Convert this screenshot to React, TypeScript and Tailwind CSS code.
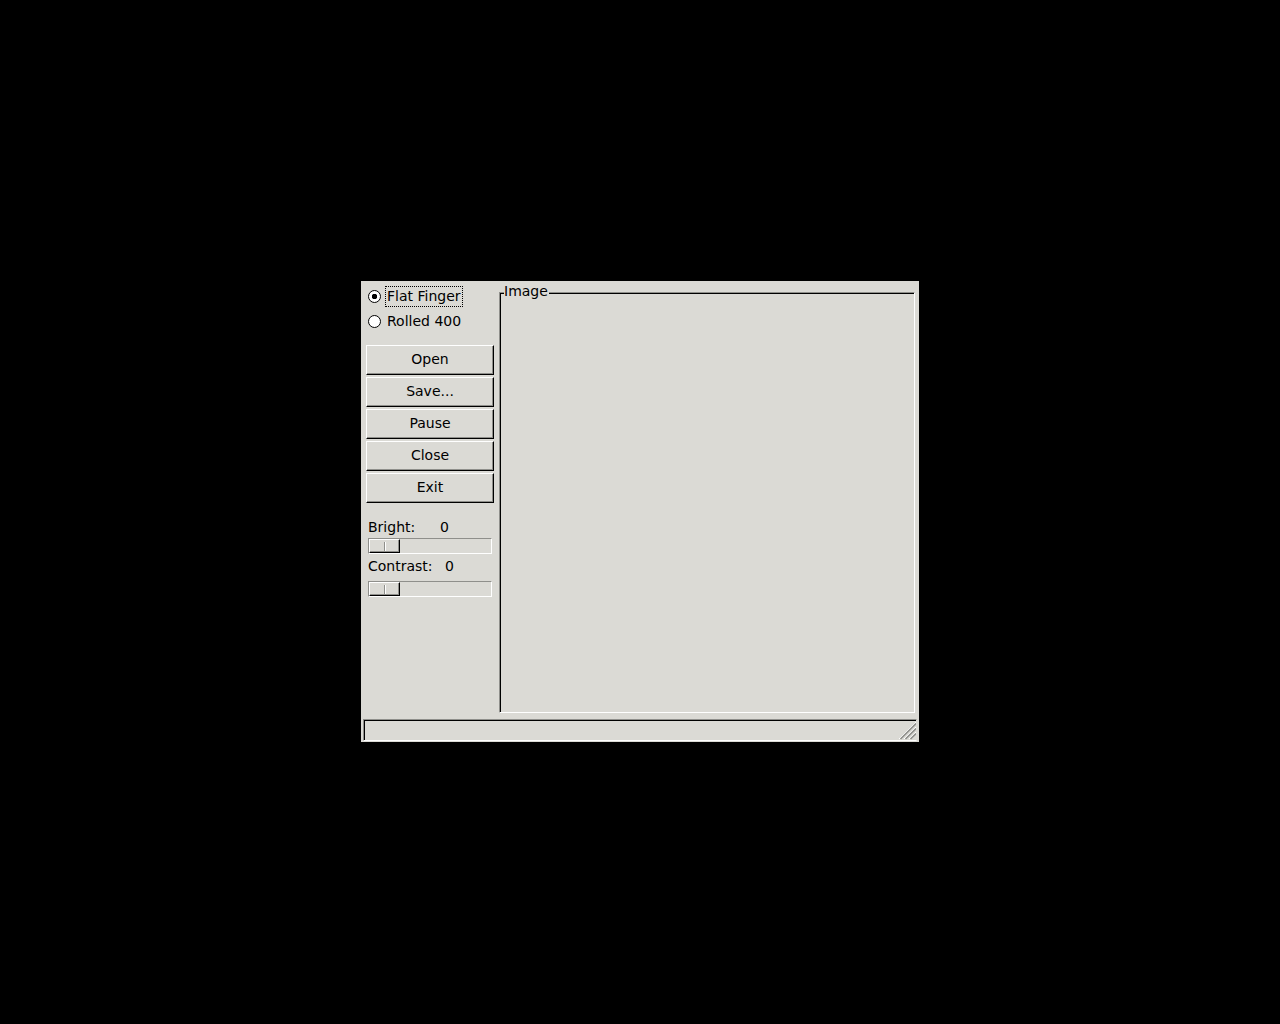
import { useState } from "react";

const actions = ["Open", "Save...", "Pause", "Close", "Exit"];

function ModeOption({
  label,
  checked,
  onSelect,
}: {
  label: string;
  checked: boolean;
  onSelect: () => void;
}) {
  return (
    <label className="flex h-[25px] items-center pl-0.5">
      <input
        type="radio"
        name="mode"
        checked={checked}
        onChange={onSelect}
        className="size-[13px] shrink-0 appearance-none rounded-full border border-black bg-white checked:bg-[radial-gradient(circle,black_2.5px,white_3px)]"
      />
      <span
        className={
          checked
            ? "ml-1 border border-dotted border-black px-px pb-px leading-[18px]"
            : "ml-1 border border-transparent px-px pb-px leading-[18px]"
        }
      >
        {label}
      </span>
    </label>
  );
}

function Slider({ id }: { id: string }) {
  return (
    <input
      id={id}
      type="range"
      min={0}
      max={100}
      defaultValue={0}
      className="block h-4 w-full appearance-none border border-t-[#8f8f8b] border-r-white border-b-white border-l-[#8f8f8b] bg-[#dbdad5] [&::-webkit-slider-thumb]:h-3.5 [&::-webkit-slider-thumb]:w-[31px] [&::-webkit-slider-thumb]:appearance-none [&::-webkit-slider-thumb]:border [&::-webkit-slider-thumb]:border-t-white [&::-webkit-slider-thumb]:border-r-black [&::-webkit-slider-thumb]:border-b-black [&::-webkit-slider-thumb]:border-l-white [&::-webkit-slider-thumb]:bg-[#dbdad5] [&::-webkit-slider-thumb]:bg-[linear-gradient(90deg,#8f8f8b_50%,white_50%)] [&::-webkit-slider-thumb]:bg-[length:2px_9px] [&::-webkit-slider-thumb]:bg-center [&::-webkit-slider-thumb]:bg-no-repeat [&::-webkit-slider-thumb]:shadow-[inset_-1px_-1px_#8f8f8b]"
    />
  );
}

function SizeGrip() {
  return (
    <svg width="17" height="18" viewBox="0 0 17 18" aria-hidden="true" className="shrink-0">
      <path d="M0 17 17 0M5 17 17 5M10 17 17 10" stroke="#ffffff" />
      <path d="M1.5 17 17 1.5M6.5 17 17 6.5M11.5 17 17 11.5" stroke="#8f8f8b" strokeWidth="1.6" />
    </svg>
  );
}

export default function App() {
  const [mode, setMode] = useState("Flat Finger");

  return (
    <div className="flex min-h-screen items-center justify-center bg-black pb-px font-['DejaVu_Sans',sans-serif] text-[14px] text-black">
      <main className="flex w-full max-w-[558px] flex-col bg-[#dbdad5] pt-[3px]">
        <div className="flex pr-1 pl-[5px]">
          <div className="flex w-32 shrink-0 flex-col">
            <div role="radiogroup" aria-label="Mode">
              <ModeOption
                label="Flat Finger"
                checked={mode === "Flat Finger"}
                onSelect={() => setMode("Flat Finger")}
              />
              <ModeOption
                label="Rolled 400"
                checked={mode === "Rolled 400"}
                onSelect={() => setMode("Rolled 400")}
              />
            </div>

            <div className="mt-[11px] flex flex-col gap-0.5">
              {actions.map((name) => (
                <button
                  key={name}
                  type="button"
                  className="h-[30px] border border-t-white border-r-black border-b-black border-l-white pb-0.5 leading-5 shadow-[inset_-1px_-1px_#8f8f8b]"
                >
                  {name}
                </button>
              ))}
            </div>

            <div className="mt-3.5 px-0.5">
              <div className="flex h-[21px] leading-5">
                <label htmlFor="bright" className="w-18">
                  Bright:
                </label>
                <output htmlFor="bright">0</output>
              </div>
              <Slider id="bright" />
              <div className="mt-0.5 flex h-[25px] leading-5">
                <label htmlFor="contrast" className="w-[77px]">
                  Contrast:
                </label>
                <output htmlFor="contrast">0</output>
              </div>
              <Slider id="contrast" />
            </div>
          </div>

          <fieldset className="relative mt-2 ml-[5px] min-h-[421px] min-w-0 flex-1 border border-t-[#8f8f8b] border-r-white border-b-white border-l-[#8f8f8b] shadow-[inset_1px_1px_black]">
            <legend className="absolute -top-3 left-1 bg-[#dbdad5] pr-px leading-5">
              Image
            </legend>
          </fieldset>
        </div>

        <footer className="mt-1.5 mr-0.5 mb-px ml-0.5 border border-t-[#8f8f8b] border-r-transparent border-b-white border-l-[#8f8f8b]">
          <div className="flex h-5 items-end justify-end border-t border-l border-black">
            <SizeGrip />
          </div>
        </footer>
      </main>
    </div>
  );
}
